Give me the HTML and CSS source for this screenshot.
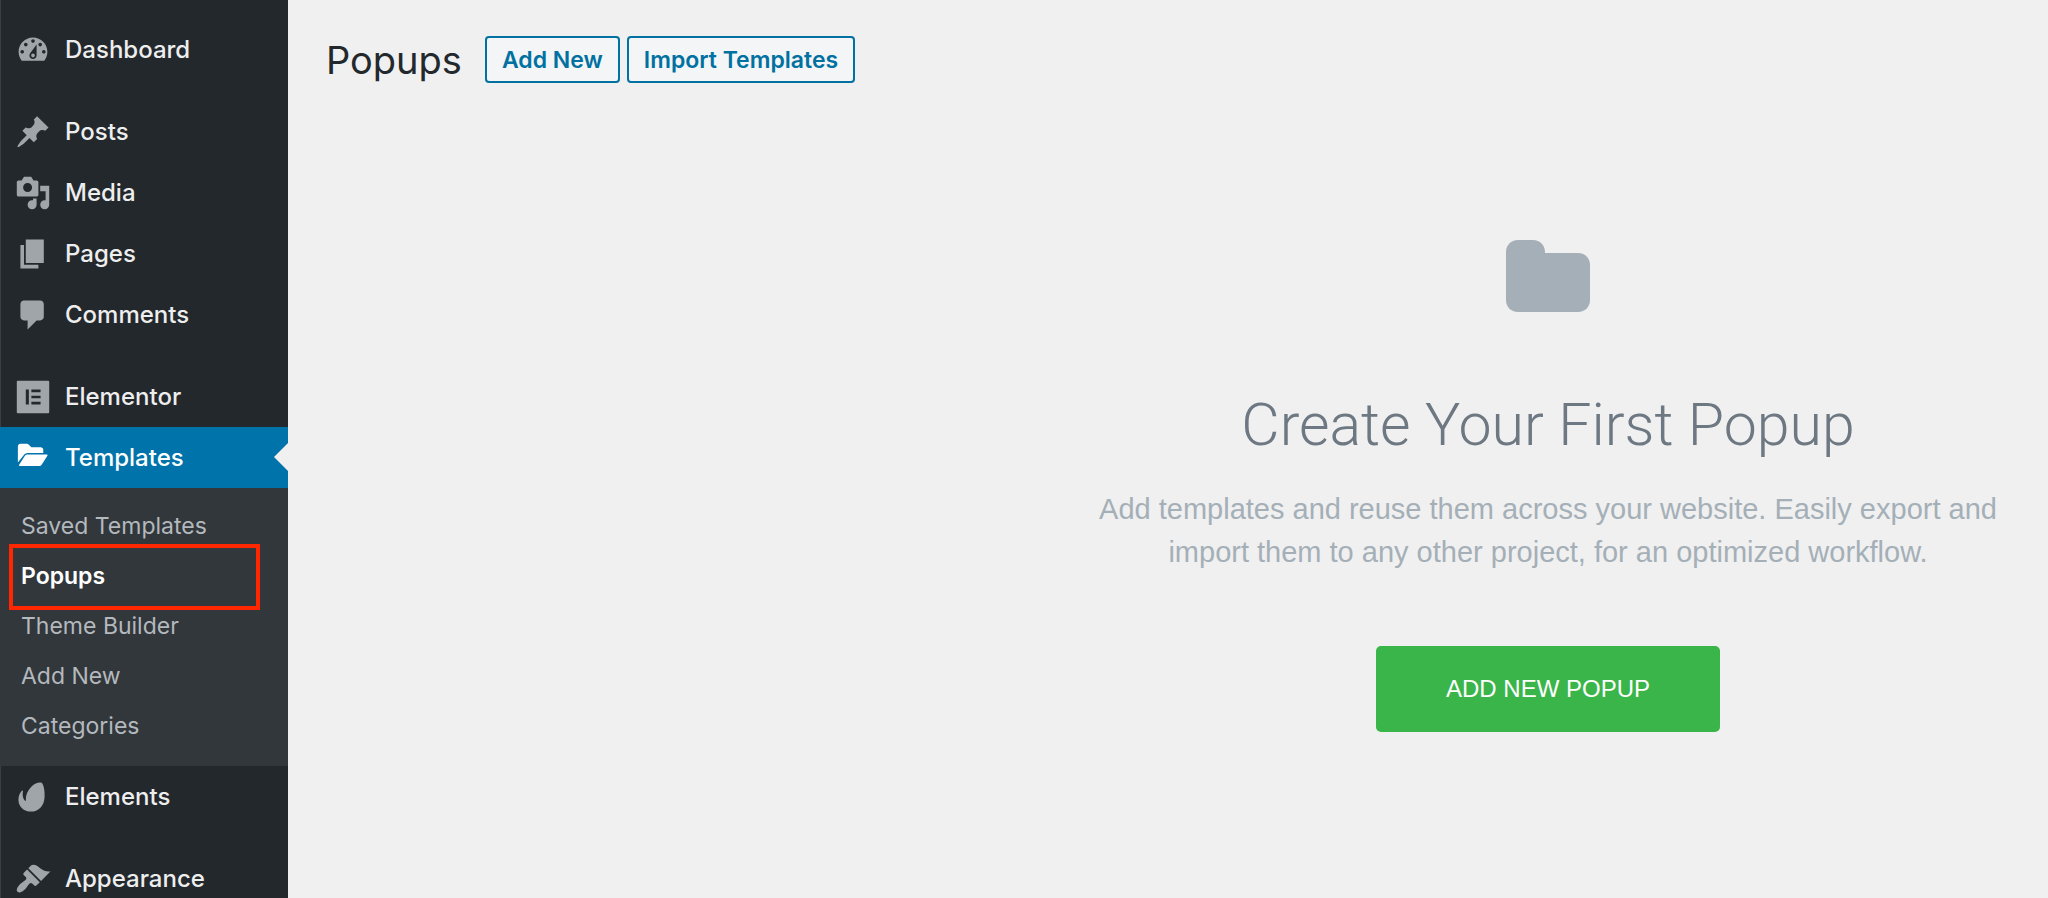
FILE: index.html
```html
<!DOCTYPE html>
<html lang="en">
<head>
    <meta charset="UTF-8">
    <meta name="viewport" content="width=device-width, initial-scale=1.0">
    <title>Popups</title>
    <link rel="stylesheet" href="styles.css">
</head>
<body>

    <nav class="sidebar">
        <ul class="menu">
            <li>
                <a class="menu-item" href="#">
                    <svg class="icon" viewBox="0 0 20 20"><path d="M3.76 16h12.48c1.1-1.37 1.76-3.11 1.76-5 0-4.42-3.58-8-8-8s-8 3.58-8 8c0 1.89.66 3.63 1.76 5zM10 4c.55 0 1 .45 1 1s-.45 1-1 1-1-.45-1-1 .45-1 1-1zM6 6c.55 0 1 .45 1 1s-.45 1-1 1-1-.45-1-1 .45-1 1-1zm8 0c.55 0 1 .45 1 1s-.45 1-1 1-1-.45-1-1 .45-1 1-1zm-5.37 5.55L12 7v6c0 1.1-.9 2-2 2s-2-.9-2-2c0-.57.24-1.08.63-1.45zM4 10c.55 0 1 .45 1 1s-.45 1-1 1-1-.45-1-1 .45-1 1-1zm12 0c.55 0 1 .45 1 1s-.45 1-1 1-1-.45-1-1 .45-1 1-1zm-5 3c0-.55-.45-1-1-1s-1 .45-1 1 .45 1 1 1 1-.45 1-1z"/></svg>
                    Dashboard
                </a>
            </li>
            <li class="separator"></li>
            <li>
                <a class="menu-item" href="#">
                    <svg class="icon" viewBox="0 0 20 20"><path d="M10.44 3.02l1.82-1.82 6.36 6.35-1.83 1.82c-1.05-.68-2.48-.57-3.41.36l-.75.75c-.92.93-1.04 2.35-.35 3.41l-1.83 1.82-2.41-2.41-2.8 2.79c-.42.42-3.38 2.71-3.8 2.29s1.86-3.39 2.28-3.81l2.79-2.79L4.1 9.36l1.83-1.82c1.05.69 2.48.57 3.4-.36l.75-.75c.93-.92 1.05-2.35.36-3.41z"/></svg>
                    Posts
                </a>
            </li>
            <li>
                <a class="menu-item" href="#">
                    <svg class="icon" viewBox="0 0 20 20"><path d="M13 11V4c0-.55-.45-1-1-1h-1.67L9 1H5L3.67 3H2c-.55 0-1 .45-1 1v7c0 .55.45 1 1 1h10c.55 0 1-.45 1-1zM7 4.5c1.38 0 2.5 1.12 2.5 2.5S8.38 9.5 7 9.5 4.5 8.38 4.5 7 5.62 4.5 7 4.5zM14 6h5v10.5c0 1.38-1.12 2.5-2.5 2.5S14 17.88 14 16.5s1.12-2.5 2.5-2.5c.17 0 .34.02.5.05V9h-3V6zm-4 8.05V13h2v3.5c0 1.38-1.12 2.5-2.5 2.5S7 17.88 7 16.5 8.12 14 9.5 14c.17 0 .34.02.5.05z"/></svg>
                    Media
                </a>
            </li>
            <li>
                <a class="menu-item" href="#">
                    <svg class="icon" viewBox="0 0 20 20"><path d="M6 15V2h10v13H6zm-1 1h8v2H3V5h2v11z"/></svg>
                    Pages
                </a>
            </li>
            <li>
                <a class="menu-item" href="#">
                    <svg class="icon" viewBox="0 0 20 20"><path d="M5 2h9c1.1 0 2 .9 2 2v7c0 1.1-.9 2-2 2h-2l-5 5v-5H5c-1.1 0-2-.9-2-2V4c0-1.1.9-2 2-2z"/></svg>
                    Comments
                </a>
            </li>
            <li class="separator"></li>
            <li>
                <a class="menu-item" href="#">
                    <svg class="icon" viewBox="0 0 20 20"><path fill-rule="evenodd" d="M1.5 1h17c.3 0 .5.2.5.5v17c0 .3-.2.5-.5.5h-17c-.3 0-.5-.2-.5-.5v-17c0-.3.2-.5.5-.5zM6 5.800v8.400h1.700V5.800zM9.100 5.800v1.500h5.100V5.800zM9.100 9.250v1.500h5.100v-1.500zM9.100 12.700v1.500h5.100v-1.500z"/></svg>
                    Elementor
                </a>
            </li>
            <li>
                <a class="menu-item active" href="#">
                    <svg class="icon" viewBox="0 0 20 20"><path d="M1.600 12.500V3.700C1.600 2.800 2.200 2.100 3.100 2.100h3.500c.5 0 .8.200 1.100.5l1.400 1.400h5.100c.9 0 1.500.6 1.500 1.500v1.700H7.100c-1 0-1.900.5-2.400 1.400zM2.700 14.500c-.4 0-.6-.4-.4-.7l3.200-5c.3-.5.8-.8 1.400-.8h10.700c.4 0 .6.4.4.7l-3.200 5c-.3.500-.8.800-1.400.8z"/></svg>
                    Templates
                </a>
                <ul class="submenu">
                    <li><a href="#">Saved Templates</a></li>
                    <li class="current"><a href="#">Popups</a></li>
                    <li><a href="#">Theme Builder</a></li>
                    <li><a href="#">Add New</a></li>
                    <li><a href="#">Categories</a></li>
                </ul>
            </li>
            <li>
                <a class="menu-item" href="#">
                    <svg class="icon" viewBox="0 0 20 20"><path d="M14.700 2.100c1.100.5 2 4.200 1.700 8.300-.4 4.900-3.500 7.700-7.500 7.700-4 0-7-2.900-7-6.600 0-2.200.8-3.900 1.900-5 .3-.3.700 0 .6.400-.4 1.900 0 3.900 1 5.100.3.300.6.200.6-.2-.1-3.100 1.100-5.700 3.200-7.700 1.700-1.600 4.200-2.500 5.500-2z"/></svg>
                    Elements
                </a>
            </li>
            <li class="separator"></li>
            <li>
                <a class="menu-item" href="#">
                    <svg class="icon" viewBox="0 0 20 20"><path d="M14.480 11.060L7.410 3.990l1.500-1.500c.5-.56 2.300-.47 3.510.32 1.210.8 1.430 1.280 2.910 2.100 1.180.64 2.450 1.260 4.450.85zm-.71.71L6.700 4.700 4.930 6.470c-.39.39-.39 1.020 0 1.410l1.060 1.060c.39.39.39 1.030 0 1.420-.6.6-1.430 1.110-2.210 1.690-.35.26-.7.53-1.010.84C1.430 14.230.4 16.080 1.400 17.070c.99 1 2.840-.03 4.180-1.360.31-.31.58-.66.85-1.020.57-.78 1.080-1.610 1.690-2.210.39-.39 1.020-.39 1.410 0l1.060 1.060c.39.39 1.020.39 1.410 0z"/></svg>
                    Appearance
                </a>
            </li>
        </ul>
    </nav>

    <main class="content">
        <header class="page-header">
            <h1>Popups</h1>
            <div class="actions">
                <button class="action" type="button">Add New</button>
                <button class="action" type="button">Import Templates</button>
            </div>
        </header>

        <section class="blank-state">
            <svg class="folder" viewBox="0 0 84 72"><path d="M12 0h15c7 0 12 5 12 12v1h33c7 0 12 5 12 12v35c0 7-5 12-12 12H12C5 72 0 67 0 60V12C0 5 5 0 12 0z"/></svg>
            <h2>Create Your First Popup</h2>
            <p>Add templates and reuse them across your website. Easily export and import them to any other project, for an optimized workflow.</p>
            <button class="create" type="button">ADD NEW POPUP</button>
        </section>
    </main>

</body>
</html>
```
FILE: styles.css
```css
* {
    box-sizing: border-box;
}
body {
    margin: 0;
    display: flex;
    height: 100vh;
    overflow: hidden;
    background-color: #f0f0f0;
    font-family: Inter, sans-serif;
}
ul {
    list-style: none;
    margin: 0;
    padding: 0;
}
a {
    text-decoration: none;
}
.sidebar {
    flex: 0 0 288px;
    background-color: #23282d;
    box-shadow: inset 1px 0 #3a3f43;
}
.menu {
    padding-top: 19px;
}
.menu-item {
    display: flex;
    align-items: center;
    gap: 14px;
    height: 61px;
    padding-left: 15px;
    font-size: 24px;
    font-weight: 500;
    color: #eee;
}
.icon {
    width: 36px;
    height: 36px;
    fill: #a0a5aa;
}
.separator {
    height: 21px;
}
.menu-item.active {
    position: relative;
    background-color: #0073aa;
    color: #fff;
}
.menu-item.active .icon {
    fill: #fff;
}
/* arrow pointing at the open section */
.menu-item.active::after {
    content: "";
    position: absolute;
    right: 0;
    top: 16px;
    border: 14px solid transparent;
    border-left-width: 0;
    border-right-color: #f0f0f0;
}
.submenu {
    padding: 13px 0 15px;
    background-color: #32373c;
}
.submenu a {
    display: block;
    padding-left: 21px;
    font-size: 23px;
    line-height: 50px;
    color: #b4b9be;
}
.submenu .current {
    position: relative;
}
.submenu .current a {
    font-weight: 600;
    color: #fff;
}
.submenu .current::after {
    content: "";
    position: absolute;
    inset: -7px 28px -9px 9px;
    border: 4px solid #ff2600;
    pointer-events: none;
}
.content {
    flex: 1;
    display: flex;
    flex-direction: column;
    min-width: 0;
    padding: 36px 0 0 38px;
}
.page-header {
    display: flex;
    align-items: center;
    gap: 23px;
}
.page-header h1 {
    margin: 0;
    font-size: 38px;
    font-weight: 400;
    line-height: 46px;
    color: #23282d;
}
.actions {
    display: flex;
    gap: 7px;
}
.action {
    height: 47px;
    padding: 0 15px;
    border: 2px solid #0071a1;
    border-radius: 4px;
    background-color: #f3f5f6;
    font-family: inherit;
    font-size: 23px;
    font-weight: 600;
    color: #0071a1;
    cursor: pointer;
}
.blank-state {
    align-self: flex-end;
    display: flex;
    flex-direction: column;
    align-items: center;
    width: 100%;
    max-width: 1000px;
    padding: 157px 50px 0;
    font-family: "Liberation Sans", Arial, sans-serif;
    text-align: center;
}
.folder {
    width: 84px;
    height: 72px;
    fill: #a4afb7;
}
.blank-state h2 {
    margin: 77px 0 0;
    font-family: Roboto, sans-serif;
    font-size: 59px;
    font-weight: 300;
    line-height: 72px;
    color: #6d7882;
}
.blank-state p {
    margin: 27px 0 0;
    font-size: 29px;
    line-height: 43px;
    color: #a4afb7;
}
.create {
    height: 86px;
    margin-top: 72px;
    padding: 0 70px;
    border: none;
    border-radius: 5px;
    background-color: #39b54a;
    font-family: inherit;
    font-size: 24px;
    color: #fff;
    cursor: pointer;
}
```
